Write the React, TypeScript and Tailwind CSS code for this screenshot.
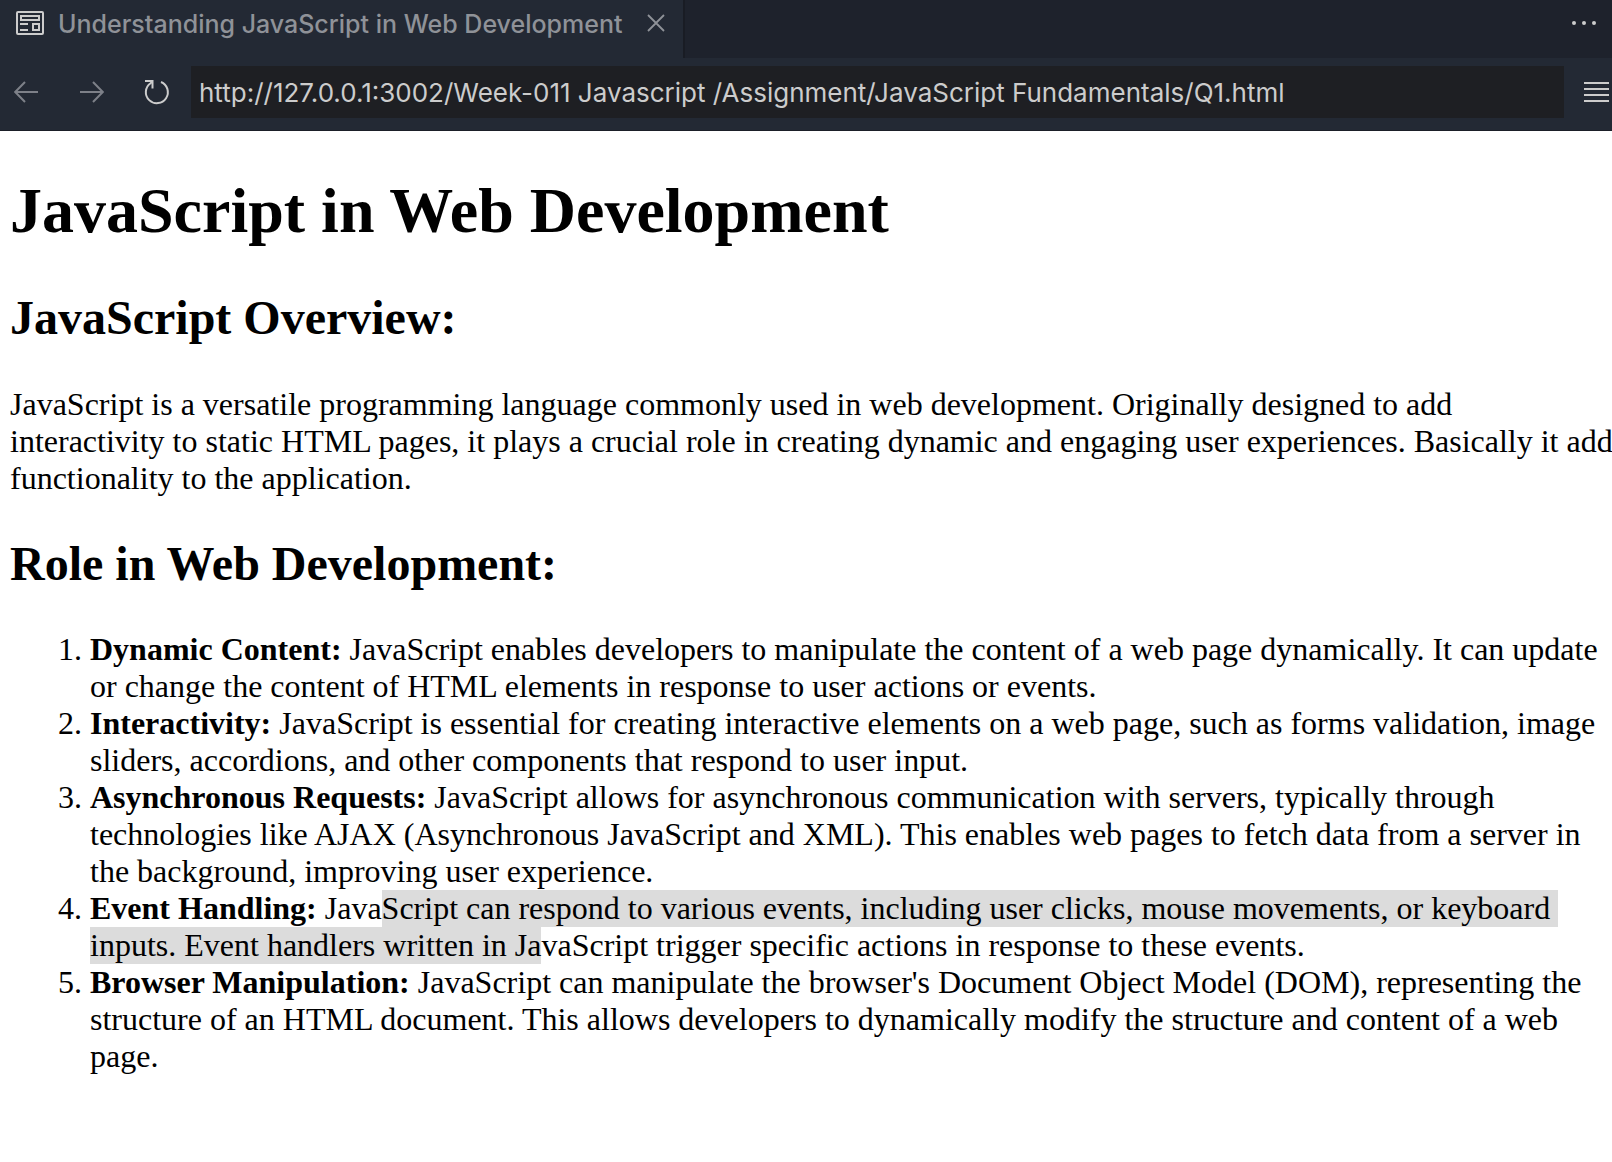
import React from "react";

function PreviewIcon() {
  return (
    <svg width="28" height="24" viewBox="0 0 28 24" fill="none" stroke="currentColor" strokeWidth="2" aria-hidden="true">
      <rect x="1" y="1" width="26" height="22" rx="1" />
      <rect x="5" y="5" width="18" height="4" />
      <path d="M4 13h8M4 19h8" />
      <rect x="17" y="13" width="6" height="6" />
    </svg>
  );
}

function BackIcon() {
  return (
    <svg width="24" height="22" viewBox="0 0 24 22" fill="none" stroke="currentColor" strokeWidth="2" aria-hidden="true">
      <path d="M24 11H1.5M11 1 1.2 11 11 21" />
    </svg>
  );
}

function ForwardIcon() {
  return (
    <svg width="24" height="22" viewBox="0 0 24 22" fill="none" stroke="currentColor" strokeWidth="2" aria-hidden="true">
      <path d="M0 11h22.5M13 1l9.8 10L13 21" />
    </svg>
  );
}

function ReloadIcon() {
  return (
    <svg width="26" height="26" viewBox="0 0 26 26" fill="none" stroke="currentColor" strokeWidth="2" aria-hidden="true">
      <path d="M17 3a11 11 0 1 1-10.5 1.2L8.5 2.5" />
      <path d="M1 2h7.5v7.5" />
    </svg>
  );
}

function CloseIcon() {
  return (
    <svg width="18" height="18" viewBox="0 0 18 18" fill="none" stroke="currentColor" strokeWidth="1.8" aria-hidden="true">
      <path d="M1 1l16 16M17 1 1 17" />
    </svg>
  );
}

function MoreIcon() {
  return (
    <svg width="24" height="4" viewBox="0 0 24 4" fill="currentColor" aria-hidden="true">
      <circle cx="2" cy="2" r="2" />
      <circle cx="12" cy="2" r="2" />
      <circle cx="22" cy="2" r="2" />
    </svg>
  );
}

function MenuIcon() {
  return (
    <svg width="25" height="20" viewBox="0 0 25 20" stroke="currentColor" strokeWidth="2" aria-hidden="true">
      <path d="M0 1h25M0 7h25M0 13h25M0 19h25" />
    </svg>
  );
}

function TabStrip() {
  return (
    <div className="flex h-[58px] bg-[#1e222c]">
      <div className="flex items-center border-r-2 border-[#191c24] bg-[#232934] pr-[18px] pb-3 pl-4 text-[#8f9298]">
        <span className="text-[#cccccc]">
          <PreviewIcon />
        </span>
        <span className="mr-[25px] ml-[14px] pt-[2px] text-[25px] leading-8 font-medium whitespace-nowrap">
          Understanding JavaScript in Web Development
        </span>
        <button type="button" aria-label="Close tab">
          <CloseIcon />
        </button>
      </div>
      <button type="button" aria-label="More actions" className="mr-4 mb-3 ml-auto text-[#cccccc]">
        <MoreIcon />
      </button>
    </div>
  );
}

function AddressBar() {
  return (
    <div className="flex h-[73px] items-center border-b border-[#1b1f28] bg-[#232934] pt-2 pr-[3px] pb-3 pl-[14px]">
      <button type="button" aria-label="Back" className="text-[#7d8088]">
        <BackIcon />
      </button>
      <button type="button" aria-label="Forward" className="ml-[42px] text-[#7d8088]">
        <ForwardIcon />
      </button>
      <button type="button" aria-label="Reload" className="ml-10 text-[#cccccc]">
        <ReloadIcon />
      </button>
      <input
        type="text"
        aria-label="Address"
        defaultValue="http://127.0.0.1:3002/Week-011 Javascript /Assignment/JavaScript Fundamentals/Q1.html"
        className="ml-[21px] h-[52px] min-w-0 flex-1 bg-[#1e1f23] px-2 text-[26px] text-[#cccccc] outline-none"
      />
      <button type="button" aria-label="Menu" className="ml-5 text-[#cccccc]">
        <MenuIcon />
      </button>
    </div>
  );
}

export default function App() {
  return (
    <div className="min-h-screen overflow-hidden bg-white font-['Inter',sans-serif]">
      <header>
        <TabStrip />
        <AddressBar />
      </header>
      <main className="pt-[43px] pl-[10px] font-['Liberation_Serif',serif] text-[32px] leading-[37px] text-black">
        <h1 className="text-[64px] leading-[74px] font-bold">JavaScript in Web Development</h1>
        <h2 className="mt-[42px] text-[48px] leading-[55px] font-bold">JavaScript Overview:</h2>
        <p className="-mr-1 mt-[41px]">
          JavaScript is a versatile programming language commonly used in web development. Originally designed to add
          <br />
          interactivity to static HTML pages, it plays a crucial role in creating dynamic and engaging user experiences.
          Basically it add functionality to the application.
        </p>
        <h2 className="mt-[39px] text-[48px] leading-[55px] font-bold">Role in Web Development:</h2>
        <ol className="mt-10 list-decimal pl-20">
          <li>
            <strong>Dynamic Content:</strong> JavaScript enables developers to manipulate the content of a web page
            dynamically. It can update or change the content of HTML elements in response to user actions or events.
          </li>
          <li>
            <strong>Interactivity:</strong> JavaScript is essential for creating interactive elements on a web page,
            such as forms validation, image sliders, accordions, and other components that respond to user input.
          </li>
          <li>
            <strong>Asynchronous Requests:</strong> JavaScript allows for asynchronous communication with servers,
            typically through technologies like AJAX (Asynchronous JavaScript and XML). This enables web pages to fetch
            data from a server in the background, improving user experience.
          </li>
          <li>
            <strong>Event Handling:</strong> Java
            <mark className="bg-[#dcdcdc] pb-px text-black">
              Script can respond to various events, including user clicks, mouse movements, or keyboard&nbsp;
              <br />
              inputs. Event handlers written in Ja
            </mark>
            vaScript trigger specific actions in response to these events.
          </li>
          <li>
            <strong>Browser Manipulation:</strong> JavaScript can manipulate the browser's Document Object Model (DOM),
            representing the structure of an HTML document. This allows developers to dynamically modify the structure
            and content of a web page.
          </li>
        </ol>
      </main>
    </div>
  );
}
